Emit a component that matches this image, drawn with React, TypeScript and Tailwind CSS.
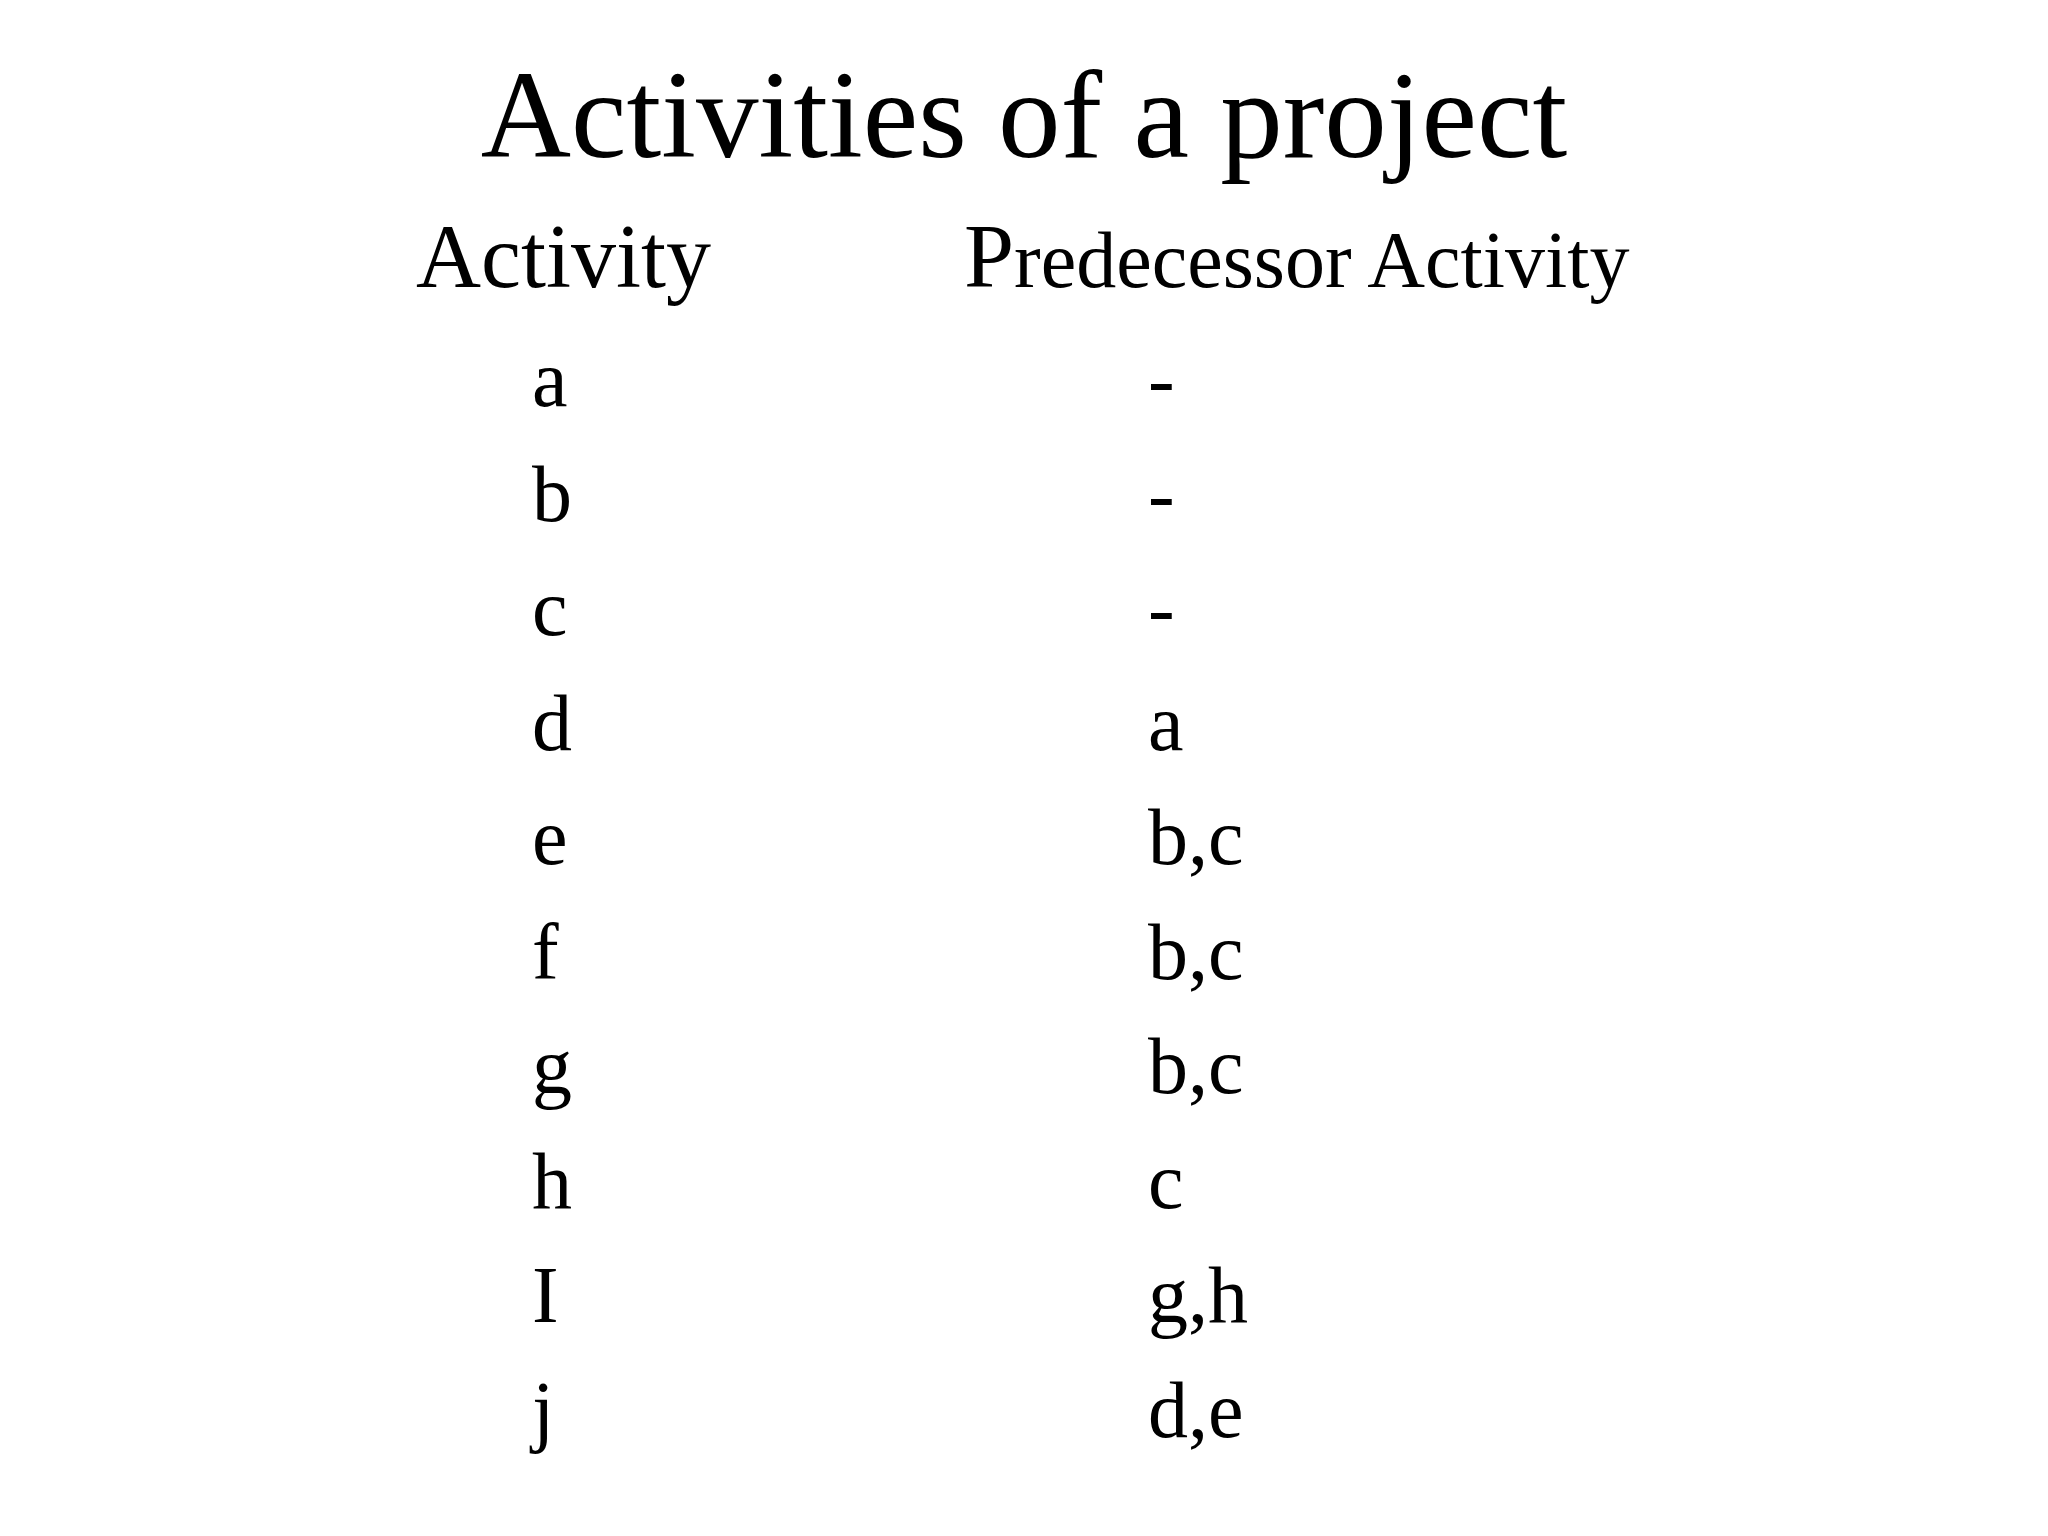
import React from "react";

const rows: [string, string][] = [
  ["a", "-"],
  ["b", "-"],
  ["c", "-"],
  ["d", "a"],
  ["e", "b,c"],
  ["f", "b,c"],
  ["g", "b,c"],
  ["h", "c"],
  ["I", "g,h"],
  ["j", "d,e"],
];

export default function App() {
  return (
    <div
      className="w-[2048px] h-[1536px] bg-white text-black overflow-hidden flex flex-col"
      style={{ fontFamily: '"Liberation Serif", "Times New Roman", serif' }}
    >
      <h1 className="pt-[53px] text-center text-[125px] leading-[125px] font-normal">
        Activities of a project
      </h1>
      <div className="mt-[22px] pl-[416px] flex text-[90px] leading-[114px]">
        <div className="w-[548px]">Activity</div>
        <div>
          <span className="text-[90px]">P</span>
          <span className="text-[80px]">redecessor Activity</span>
        </div>
      </div>
      <div className="mt-[5px] pl-[532px] flex flex-col text-[80px] leading-[114.55px]">
        {rows.map(([a, p], i) => (
          <div key={i} className="flex">
            <div className="w-[616px]">{a}</div>
            <div>{p}</div>
          </div>
        ))}
      </div>
    </div>
  );
}
